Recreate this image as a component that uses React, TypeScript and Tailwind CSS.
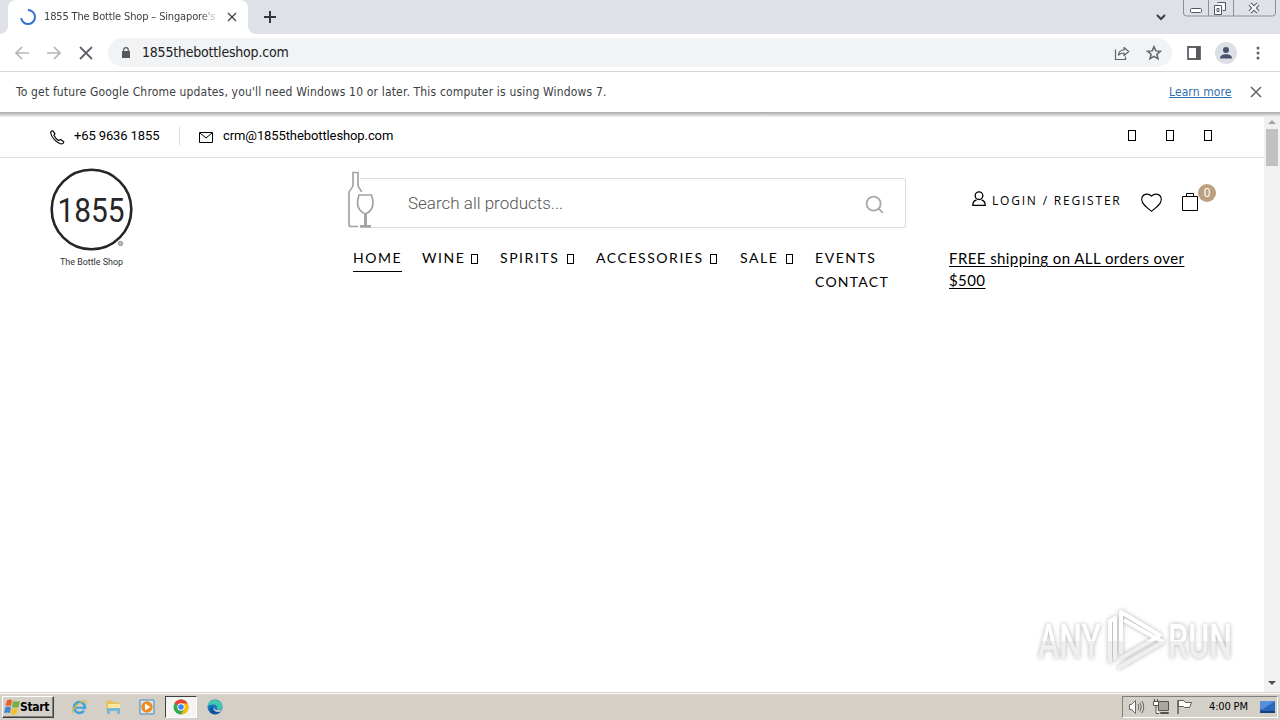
import type { ReactNode } from "react";
import { Search } from "lucide-react";

const UI_FONT = "font-['DejaVu_Sans_Condensed','DejaVu_Sans','Noto_Sans',sans-serif]";

export default function App() {
  return (
    <div className="flex h-[720px] w-[1280px] flex-col overflow-hidden bg-white font-[Roboto,sans-serif] text-black">
      <TabStrip />
      <Toolbar />
      <UpdateBar />
      <div className="flex min-h-0 flex-1">
        <main className="flex w-[1264px] flex-col">
          <TopBar />
          <ShopHeader />
          <div className="mt-auto mr-[30px] mb-[20px] flex justify-end">
            <Watermark />
          </div>
        </main>
        <Scrollbar />
      </div>
      <Taskbar />
    </div>
  );
}

function TabStrip() {
  return (
    <header className="flex h-[34px] shrink-0 bg-[#dee1e8]">
      <div className="flex w-[8px] items-end bg-white">
        <div className="h-full w-full rounded-br-[8px] bg-[#dee1e8]" />
      </div>
      <div className="flex w-[240px] items-center rounded-t-[8px] bg-white pl-[12px]">
        <svg width="16" height="16" viewBox="0 0 16 16" fill="none" className="shrink-0">
          <path d="M8 1a7 7 0 1 1-6.9 8.2" stroke="#3672d0" strokeWidth="2" />
        </svg>
        <span
          className={`ml-[8px] w-[174px] overflow-hidden text-[11px] tracking-[-0.15px] whitespace-nowrap text-[#3c4043] [mask-image:linear-gradient(to_right,black_155px,transparent_176px)] ${UI_FONT}`}
        >
          1855 The Bottle Shop – Singapore's |
        </span>
        <Cross size={8} className="ml-[10px] text-[#3c4043]" />
      </div>
      <div className="w-[8px] bg-white">
        <div className="h-full w-full rounded-bl-[8px] bg-[#dee1e8]" />
      </div>
      <svg width="12" height="12" viewBox="0 0 12 12" className="mt-[11px] ml-[8px]">
        <path d="M6 0v12M0 6h12" stroke="#33363b" strokeWidth="2" />
      </svg>
      <svg width="12" height="8" viewBox="0 0 12 8" className="mt-[13px] ml-[879px]" fill="none">
        <path d="m2 2 4 4 4-4" stroke="#3c4043" strokeWidth="2" />
      </svg>
      <svg width="94" height="18" viewBox="0 0 94 18" className="ml-[16px]" fill="none">
        <path d="M.5 0v13q0 3 3 3h86q3 0 3-3V0M25.500 0v16M50.500 0v16" stroke="#8b8f99" />
        <rect x="7.500" y="8.500" width="11" height="4" rx="1" fill="#fff" stroke="#53565d" />
        <path d="M34.500 2.500h8v8h-3M31.500 5.500h7v9h-7zM34 8.500h2v3h-2z" stroke="#53565d" fill="#fff" />
        <path d="m67 4 8 8m0-8-8 8" stroke="#53565d" strokeWidth="4" />
        <path d="m67 4 8 8m0-8-8 8" stroke="#fff" strokeWidth="2" />
      </svg>
    </header>
  );
}

function Toolbar() {
  return (
    <div className="flex h-[38px] shrink-0 items-center border-b border-[#d5d7da] bg-white">
      <svg width="14" height="14" viewBox="0 0 14 14" className="ml-[15px] text-[#b4b6b9]" fill="none" stroke="currentColor" strokeWidth="1.700">
        <path d="M14 7H1.500M7 1 1 7l6 6" />
      </svg>
      <svg width="14" height="14" viewBox="0 0 14 14" className="ml-[18px] text-[#b4b6b9]" fill="none" stroke="currentColor" strokeWidth="1.700">
        <path d="M0 7h12.500M7 1l6 6-6 6" />
      </svg>
      <Cross size={12} className="ml-[19px] text-[#5f6368]" />
      <div className="ml-[16px] flex h-[29px] w-[1064px] items-center rounded-full bg-[#f1f3f4]">
        <svg width="8" height="12" viewBox="0 0 8 12" className="ml-[14px]" fill="none">
          <path d="M0 4h8v7H0z" fill="#55585d" />
          <path d="M1.700 4.500V3a2.300 2.300 0 0 1 4.600 0v1.500" stroke="#55585d" strokeWidth="1.200" />
        </svg>
        <span className={`ml-[12px] w-[960px] text-[14px] tracking-[-0.2px] whitespace-nowrap text-[#202124] ${UI_FONT}`}>
          1855thebottleshop.com
        </span>
        <svg width="16" height="16" viewBox="0 0 16 16" className="ml-[12px]" fill="none" stroke="#5f6368" strokeWidth="1.200">
          <path d="M1.500 4.500v10h10v-3" />
          <path d="M4.500 10c.3-3.500 2.200-5 5.500-5V2.500l4.700 4L10 10.500V8c-2.400 0-4 .6-5.500 2Z" strokeLinejoin="round" />
        </svg>
        <svg width="16" height="16" viewBox="0 0 16 16" className="ml-[16px]" fill="none" stroke="#5f6368" strokeWidth="1.500">
          <path d="m8 1.700 1.800 4.200 4.600.4-3.500 3 1.100 4.500L8 11.400l-4 2.400 1.100-4.500-3.500-3 4.600-.4L8 1.700Z" />
        </svg>
      </div>
      <svg width="14" height="14" viewBox="0 0 14 14" className="ml-[15px]" fill="none">
        <path d="M1 1h12v12H1z" stroke="#5f6368" strokeWidth="1.800" />
        <path d="M9 1h4v12H9z" fill="#55585d" />
      </svg>
      <svg width="22" height="22" viewBox="0 0 22 22" className="ml-[14px]">
        <circle cx="11" cy="11" r="11" fill="#dcdfe6" />
        <circle cx="11" cy="8" r="3" fill="#48526e" />
        <path d="M5 16.500c0-3 3-4.200 6-4.200s6 1.200 6 4.200z" fill="#48526e" />
      </svg>
      <svg width="4" height="14" viewBox="0 0 4 14" className="ml-[19px]" fill="#5f6368">
        <circle cx="2" cy="2" r="1.500" />
        <circle cx="2" cy="7" r="1.500" />
        <circle cx="2" cy="12" r="1.500" />
      </svg>
    </div>
  );
}

function UpdateBar() {
  return (
    <div className="flex h-[45px] shrink-0 flex-col">
      <div className={`flex h-[40px] items-center pl-[16px] text-[12px] whitespace-nowrap text-[#3c4043] ${UI_FONT}`}>
        <span className="w-[1153px] tracking-[0.165px]">
          To get future Google Chrome updates, you'll need Windows 10 or later. This computer is using Windows 7.
        </span>
        <span className="w-[82px] tracking-[0.1px] text-[#2f6fb0] underline">Learn more</span>
        <Cross size={10} className="text-[#5f6368]" />
      </div>
      <div className="h-[5px] bg-linear-to-b from-[#a9a9a9] to-[#f4f4f4]" />
    </div>
  );
}

function TopBar() {
  return (
    <div className="flex h-[41px] shrink-0 items-center border-b border-[#e0e0e0] pb-[3px] text-[13px] whitespace-nowrap">
      <svg width="15" height="15" viewBox="0 0 15 15" className="mt-[3px] ml-[50px]" fill="none" stroke="#000" strokeWidth="1.100">
        <path d="M2.800.8 5 3.800 3.900 5.300c1 2.200 2.500 3.900 4.700 5.200l1.900-1 3.300 2.300c-.2 1.600-1.300 2.200-2.700 2.200C6.500 12.700 1.200 7.300.7 3 .7 1.700 1.500.9 2.800.8Z" />
      </svg>
      <span className="ml-[9px] w-[105px] tracking-[-0.12px]">+65 9636 1855</span>
      <span className="h-[18px] w-px bg-[#dedede]" />
      <svg width="14" height="11" viewBox="0 0 14 11" className="mt-[3px] ml-[19px]" fill="none" stroke="#000">
        <path d="M.5.5h13v10H.5zM1 1l6 5 6-5" />
      </svg>
      <span className="ml-[10px] w-[905px] tracking-[-0.1px]">crm@1855thebottleshop.com</span>
      <Tofu />
      <Tofu className="ml-[30px]" />
      <Tofu className="ml-[30px]" />
    </div>
  );
}

function ShopHeader() {
  return (
    <div className="flex h-[140px] shrink-0">
      <Logo />
      <div className="ml-[215px] w-[560px] pt-[14px]">
        <SearchBox />
        <nav className="flex h-[50px] pt-[18px] pl-[6px] font-[Lato,sans-serif] text-[14px] leading-[24px] tracking-[1.55px] whitespace-nowrap">
          <div className="-ml-px h-[26px] w-[49px] border-b border-black">HOME</div>
          <NavItem label="WINE" className="ml-[20px] w-[56px]" />
          <NavItem label="SPIRITS" className="ml-[22px] w-[74px]" />
          <NavItem label="ACCESSORIES" className="ml-[22px] w-[121px]" />
          <NavItem label="SALE" className="ml-[23px] w-[53px]" />
          <div className="ml-[22px]">
            EVENTS
            <br />
            <span className="tracking-[1.25px]">CONTACT</span>
          </div>
        </nav>
      </div>
      <div className="ml-[41px] flex w-[290px] flex-col pt-[26px]">
        <AccountLinks />
        <p className="mt-[35px] w-[250px] font-[Lato,sans-serif] text-[15px] leading-[22px] tracking-[0.42px] underline underline-offset-2">
          FREE shipping on ALL orders over $500
        </p>
      </div>
    </div>
  );
}

function Logo() {
  return (
    <svg width="84" height="102" viewBox="0 0 84 102" className="mt-[10px] ml-[49px] shrink-0 overflow-visible">
      <circle cx="42.500" cy="41.500" r="39.800" fill="none" stroke="#262626" strokeWidth="2.600" />
      <text x="8.500" y="53.500" textLength="67" lengthAdjust="spacingAndGlyphs" fontFamily="Roboto, sans-serif" fontSize="34" fill="#262626">
        1855
      </text>
      <circle cx="71.500" cy="75.500" r="2.200" fill="#bbb" stroke="#777" strokeWidth=".7" />
      <text x="11" y="97" textLength="63" lengthAdjust="spacingAndGlyphs" fontFamily="Roboto, sans-serif" fontSize="9.500" fill="#333">
        The Bottle Shop
      </text>
    </svg>
  );
}

function SearchBox() {
  return (
    <div className="flex h-[56px] items-end">
      <svg width="26" height="57" viewBox="0 0 26 57" className="z-10 shrink-0" fill="none" stroke="#a3a3a3" strokeWidth="1.700">
        <path d="M10 55.500H3q-2 0-2-2V22c0-4 4-4 4-8V1.500h5V14c0 3 3 4 3.500 7" />
        <path d="M11 24h12.500c3 9 1 16-6 19C10 40 8 33 11 24Z" fill="#fff" />
        <path d="M17.500 43v12" strokeWidth="3" />
        <path d="M12 55.300h11" strokeWidth="2.500" />
      </svg>
      <div className="-ml-[14px] flex h-[50px] w-[546px] items-center rounded-r-[3px] border border-l-0 border-[#dcdcdc]">
        <span className="mt-[2px] ml-[48px] w-[456px] text-[17px] font-light text-[#555]">
          Search all products...
        </span>
        <Search size={21} strokeWidth={2.1} className="mt-[3px] text-[#aaa]" />
      </div>
    </div>
  );
}

function AccountLinks() {
  return (
    <div className="flex h-[28px] whitespace-nowrap">
      <svg width="14" height="16" viewBox="0 0 14 16" className="mt-[7px] ml-[23px]" fill="none" stroke="#000" strokeWidth="1.300">
        <circle cx="7" cy="4.700" r="3.800" />
        <path d="M4.500 9C2 9.500.8 11.500.8 14.300h12.400c0-2.800-1.200-4.800-3.700-5.300" />
      </svg>
      <span className="mt-[8px] ml-[6px] w-[149px] font-['Open_Sans',sans-serif] text-[12px] leading-[18px] tracking-[1.8px]">
        LOGIN / REGISTER
      </span>
      <svg width="21" height="19" viewBox="0 0 21 19" className="mt-[9px] ml-0" fill="none" stroke="#000" strokeWidth="1.100">
        <path d="M10.500 3.200C7-.6.700 1 .7 6.500c0 4.500 5 8.200 9.800 11.800 4.800-3.600 9.800-7.300 9.800-11.800 0-5.500-6.300-7.100-9.800-3.300Z" />
      </svg>
      <svg width="16" height="19" viewBox="0 0 16 19" className="mt-[8px] ml-[20px]" fill="none" stroke="#000">
        <path d="M.5 4.500h15v14H.5zM4.500 4.500v-3h7v3" />
      </svg>
      <span className="flex h-[18px] w-[18px] items-center justify-center rounded-full bg-[#bc9f80] text-[12px] text-white">
        0
      </span>
    </div>
  );
}

function NavItem({ label, className }: { label: string; className: string }) {
  return (
    <div className={`flex justify-between ${className}`}>
      {label}
      <Tofu className="mt-[8px]" small />
    </div>
  );
}

// Box that the browser paints for an icon-font glyph it does not have.
function Tofu({ className = "", small = false }: { className?: string; small?: boolean }) {
  return (
    <span className={`shrink-0 border border-black ${small ? "h-[10px] w-[7px]" : "h-[11px] w-[8px]"} ${className}`} />
  );
}

function Cross({ size, className = "" }: { size: number; className?: string }) {
  return (
    <svg width={size} height={size} viewBox="0 0 10 10" className={`shrink-0 overflow-visible ${className}`}>
      <path d="m0 0 10 10M10 0 0 10" stroke="currentColor" strokeWidth="1.500" />
    </svg>
  );
}

function Scrollbar() {
  return (
    <aside className="flex w-[16px] flex-col items-center bg-[#f1f1f1]">
      <svg width="8" height="4" viewBox="0 0 8 4" className="mt-[3px]" fill="#a3a3a3">
        <path d="m4 0 4 4H0z" />
      </svg>
      <div className="mt-[5px] h-[37px] w-[12px] bg-[#c1c1c1]" />
      <svg width="8" height="4" viewBox="0 0 8 4" className="mt-auto mb-[7px]" fill="#505050">
        <path d="m4 4 4-4H0z" />
      </svg>
    </aside>
  );
}

function Watermark() {
  return (
    <svg
      width="200"
      height="64"
      viewBox="0 0 200 64"
      className="overflow-visible drop-shadow-[0_0_2px_rgba(0,0,0,0.3)]"
      fill="none"
    >
      <defs>
        <linearGradient id="mark" x1="0" y1="0" x2="0" y2="64" gradientUnits="userSpaceOnUse">
          <stop offset=".52" stopColor="#fff" />
          <stop offset=".52" stopColor="#efefef" />
        </linearGradient>
      </defs>
      <g fontFamily="Roboto, sans-serif" fontSize="48" fontWeight="500" fill="url(#mark)">
        <text x="4" y="50" textLength="63" lengthAdjust="spacingAndGlyphs">
          ANY
        </text>
        <text x="134" y="50" textLength="64" lengthAdjust="spacingAndGlyphs">
          RUN
        </text>
      </g>
      <path
        d="M76 55V13l5-3v42M87 46V4l40 24M84 60l45-26-39-22M87 50l38-22"
        stroke="url(#mark)"
        strokeWidth="4"
        strokeLinejoin="round"
      />
    </svg>
  );
}

function Taskbar() {
  return (
    <footer className="flex h-[28px] shrink-0 items-center border-t border-[#d4d0c8] bg-[#d4d0c8] pb-[2px] shadow-[inset_0_1px_0_#fff]">
      <button
        type="button"
        className={`mt-[3px] ml-[2px] flex h-[22px] w-[52px] items-center border border-t-white border-r-[#404040] border-b-[#404040] border-l-white pl-px text-[12px] font-bold tracking-[-0.3px] shadow-[inset_-1px_-1px_0_#808080] ${UI_FONT}`}
      >
        <svg width="16" height="16" viewBox="0 0 16 16" className="shrink-0">
          <path d="M3 1q3-1 5 0L7 7Q4.500 6 1.500 7z" fill="#e8632b" />
          <path d="M9 2q3 1 7 0l-1.500 6q-3 1-6.500 0z" fill="#75ae45" />
          <path d="M1.500 8q2.500-1 5.500 0l-1 6q-3-1-6 0z" fill="#4386cb" />
          <path d="M8 9q2.500 1 6 0l-1.500 6q-3 1-6 0z" fill="#f4be32" />
        </svg>
        Start
      </button>
      <TaskIcon className="ml-[17px]">
        <circle cx="8.500" cy="8.500" r="5.500" fill="none" stroke="#39a5dc" strokeWidth="2.600" />
        <path d="M4 8.700h10" stroke="#39a5dc" strokeWidth="2" />
        <path d="M12.500 10.200h4v2h-4z" fill="#d4d0c8" />
        <path d="M1.500 14.500C-.5 10 11 .5 15.500 2c1 .5.600 2 0 3" fill="none" stroke="#e8b83c" strokeWidth="1.300" />
      </TaskIcon>
      <TaskIcon className="ml-[18px]">
        <path d="M1 3V1.500h5L7.500 3H14v9H1z" fill="#e7c262" />
        <path d="M3 5h12v6H3z" fill="#fbe7a0" />
        <path d="M2 9h13v6h-3v-3H5v3H2z" fill="#78b7d8" />
      </TaskIcon>
      <TaskIcon className="ml-[18px]">
        <path d="M1 1h14v14H1z" fill="#d6e8f5" stroke="#4d87b9" />
        <circle cx="8" cy="8" r="5.700" fill="#f08a1d" />
        <path d="m6 4.500 5.500 3.500L6 11.500z" fill="#fff" />
      </TaskIcon>
      <div className="mt-[3px] ml-[10px] flex h-[22px] w-[32px] items-center justify-center border border-t-[#404040] border-r-white border-b-white border-l-[#404040] bg-[#f5f4f2]">
        <svg width="16" height="16" viewBox="0 0 16 16">
          <circle cx="8" cy="8" r="7.500" fill="#34a853" />
          <path d="M8 8 1.500 4.300A7.500 7.500 0 0 1 14.500 4.300z" fill="#ea4335" />
          <path d="M8 4.500h6.700A7.500 7.500 0 0 1 8 15.500L11.200 10z" fill="#fbbc04" />
          <circle cx="8" cy="8" r="3.700" fill="#fff" />
          <circle cx="8" cy="8" r="2.800" fill="#4285f4" />
        </svg>
      </div>
      <TaskIcon className="ml-[10px]">
        <circle cx="8" cy="8" r="7.500" fill="#1676c0" />
        <path d="M.7 6.500C2-1 14-1 15.500 7c.3 3-3 4.500-6 3.300 2-2.500-.5-5.300-4-4.800C3 5.800 1.500 7 .7 6.500Z" fill="#43c8ae" />
        <path d="M6.200 7.500c-2 3 .5 6.500 7 5.300-2 2.500-5.500 3-8 1.800C2 13 2.500 8 6.200 7.500Z" fill="#114f96" />
        <path d="M7 8c0 3 3.500 4.500 8 2.200l-1.500 2.300C9 14 5.500 11 7 8Z" fill="#d4d0c8" />
      </TaskIcon>
      <div className="mt-[3px] mr-[2px] ml-auto flex h-[22px] w-[156px] items-center border border-t-[#808080] border-r-white border-b-white border-l-[#808080]">
        <svg width="17" height="16" viewBox="0 0 17 16" className="ml-[5px]" fill="#fff" stroke="#6a6863">
          <path d="M1.500 5.500h2l4-4v13l-4-4h-2z" />
          <path d="M10 5q1.500 3 0 6M12 3.500q2.500 4.500 0 9M14 2q3.500 6 0 12" fill="none" />
        </svg>
        <svg width="17" height="16" viewBox="0 0 17 16" className="ml-[8px]" fill="#fff" stroke="#55534f">
          <path d="M5.500 2.500h10v9h-10z" fill="#aaa79f" />
          <path d="M7.500 13.500h8v1h-8zM.5 2.500h5v4h-5zM1.500 0v2M4.500 0v2M3 7v7.500h3" />
        </svg>
        <svg width="17" height="16" viewBox="0 0 17 16" className="ml-[6px]" fill="#fff" stroke="#5f5d58">
          <path d="M2 1v14" strokeWidth="1.500" />
          <path d="M2.500 1.500h5l2 2h6l-2 5h-5l-1-1h-5z" />
        </svg>
        <span className={`ml-[16px] w-[42px] text-[11px] tracking-[-0.15px] whitespace-nowrap ${UI_FONT}`}>4:00 PM</span>
        <svg width="15" height="14" viewBox="0 0 15 14" className="ml-[9px]">
          <path d="M0 1h15v10H0z" fill="#2969bd" />
          <path d="M0 1h15L3 9H0z" fill="#558fdc" />
          <path d="M0 11h15v2H0z" fill="#173f79" />
        </svg>
      </div>
    </footer>
  );
}

function TaskIcon({ className, children }: { className: string; children: ReactNode }) {
  return (
    <svg width="16" height="16" viewBox="0 0 16 16" className={`mt-[3px] shrink-0 ${className}`}>
      {children}
    </svg>
  );
}
